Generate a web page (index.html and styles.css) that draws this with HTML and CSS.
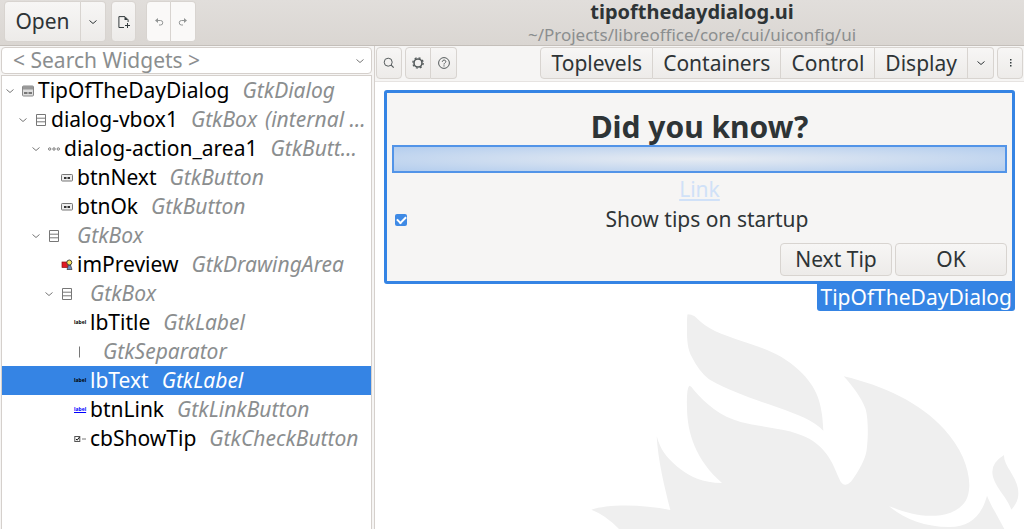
FILE: index.html
```
<!DOCTYPE html>
<html lang="en">
<head>
    <meta charset="UTF-8">
    <meta name="viewport" content="width=device-width, initial-scale=1.0">
    <title>tipofthedaydialog.ui</title>
    <link rel="stylesheet" href="styles.css">
</head>
<body>
    <!-- Shared icons -->
    <svg class="sprite" aria-hidden="true">
        <symbol id="chevron" viewBox="0 0 12 12"><path d="M2.500 4.500 6 7.500 9.500 4.500" fill="none" stroke="currentColor"/></symbol>
        <symbol id="box" viewBox="0 0 12 12"><path d="M1.500 .5h9v11h-9zM1.500 4.200h9M1.500 7.800h9" fill="none" stroke="#777"/></symbol>
        <symbol id="button" viewBox="0 0 12 12"><rect x=".5" y="2.500" width="11" height="6.500" rx=".8" fill="#eee" stroke="#777"/><path d="M3 5h2v2H3zM5.500 5h1v2h-1zM7 5h2v2H7z" fill="#333"/></symbol>
    </svg>

    <header class="headerbar">
        <div class="header-actions">
            <div class="btn-group">
                <button class="btn open-btn">Open</button>
                <button class="btn arrow-btn" aria-label="Recent files"><svg class="icon"><use href="#chevron"/></svg></button>
            </div>
            <button class="btn new-btn" aria-label="New project">
                <svg class="icon" viewBox="0 0 12 12"><path d="M6 11.500H.9V.6h6l3.200 3.200V6" fill="none" stroke="#333b3d"/><path d="M6.500.5V4H10z" fill="#333b3d"/><path d="M9.500 7v5M7 9.500h5" stroke="#333b3d"/></svg>
            </button>
            <div class="btn-group undo-group">
                <button class="btn" disabled aria-label="Undo"><svg class="icon" viewBox="0 0 12 12"><path d="M3 4.500h4.500a2.200 2.200 0 0 1 0 4.500H6" fill="none" stroke="#929595"/><path d="M5 2v5L2 4.500z" fill="#929595"/></svg></button>
                <button class="btn" disabled aria-label="Redo"><svg class="icon" viewBox="0 0 12 12"><path d="M9 4.500H4.500a2.200 2.200 0 0 0 0 4.500H6" fill="none" stroke="#929595"/><path d="M7 2v5l3-2.500z" fill="#929595"/></svg></button>
            </div>
        </div>
        <div class="header-title">
            <h1>tipofthedaydialog.ui</h1>
            <p>~/Projects/libreoffice/core/cui/uiconfig/ui</p>
        </div>
    </header>

    <main class="workspace">
        <aside class="inspector">
            <div class="search">
                <input type="text" placeholder="&lt; Search Widgets &gt;" aria-label="Search widgets">
                <svg class="icon"><use href="#chevron"/></svg>
            </div>
            <ul class="tree">
                <li class="row level-0">
                    <svg class="icon arrow"><use href="#chevron"/></svg>
                    <svg class="icon" viewBox="0 0 12 12"><rect x=".5" y="1" width="11" height="10" rx="1" fill="#ddd" stroke="#888"/><path d="M1 1h10v3.500H1z" fill="#999"/><path d="M2 7h3.500v2H2zM6.500 7H10v2H6.500z" fill="#777"/></svg>
                    <span class="name">TipOfTheDayDialog</span><em>GtkDialog</em>
                </li>
                <li class="row level-1">
                    <svg class="icon arrow"><use href="#chevron"/></svg>
                    <svg class="icon"><use href="#box"/></svg>
                    <span class="name">dialog-vbox1</span><em>GtkBox</em><em class="internal">(internal …</em>
                </li>
                <li class="row level-2">
                    <svg class="icon arrow"><use href="#chevron"/></svg>
                    <svg class="icon" viewBox="0 0 12 12"><g fill="none" stroke="#777"><circle cx="1.700" cy="6" r="1.200"/><circle cx="6" cy="6" r="1.200"/><circle cx="10.300" cy="6" r="1.200"/></g></svg>
                    <span class="name">dialog-action_area1</span><em>GtkButt…</em>
                </li>
                <li class="row leaf level-3">
                    <svg class="icon"><use href="#button"/></svg>
                    <span class="name">btnNext</span><em>GtkButton</em>
                </li>
                <li class="row leaf level-3">
                    <svg class="icon"><use href="#button"/></svg>
                    <span class="name">btnOk</span><em>GtkButton</em>
                </li>
                <li class="row level-2">
                    <svg class="icon arrow"><use href="#chevron"/></svg>
                    <svg class="icon"><use href="#box"/></svg>
                    <span class="name"></span><em>GtkBox</em>
                </li>
                <li class="row leaf level-3">
                    <svg class="icon" viewBox="0 0 12 12"><path d="M6 10.500 7.500 6h2l1.500 4.500z" fill="#6b8fc4" stroke="#333" stroke-width=".7"/><rect x="1" y="3" width="5.500" height="5.500" fill="#e01b24" stroke="#811" stroke-width=".7"/><circle cx="8.300" cy="3.500" r="2.500" fill="#f8e45c" stroke="#333" stroke-width=".9"/></svg>
                    <span class="name">imPreview</span><em>GtkDrawingArea</em>
                </li>
                <li class="row level-3">
                    <svg class="icon arrow"><use href="#chevron"/></svg>
                    <svg class="icon"><use href="#box"/></svg>
                    <span class="name"></span><em>GtkBox</em>
                </li>
                <li class="row leaf level-4">
                    <span class="icon label-icon">label</span>
                    <span class="name">lbTitle</span><em>GtkLabel</em>
                </li>
                <li class="row leaf level-4">
                    <svg class="icon" viewBox="0 0 12 12"><path d="M5.500 .5v11" stroke="#777"/></svg>
                    <span class="name"></span><em>GtkSeparator</em>
                </li>
                <li class="row leaf level-4 selected">
                    <span class="icon label-icon">label</span>
                    <span class="name">lbText</span><em>GtkLabel</em>
                </li>
                <li class="row leaf level-4">
                    <span class="icon label-icon link-icon">label</span>
                    <span class="name">btnLink</span><em>GtkLinkButton</em>
                </li>
                <li class="row leaf level-4">
                    <svg class="icon" viewBox="0 0 12 12"><rect x=".8" y="3.500" width="5" height="5" fill="#fff" stroke="#555"/><path d="m2 6 1.200 1.200L5.500 4" fill="none" stroke="#111"/><path d="M8 6h4" stroke="#777"/></svg>
                    <span class="name">cbShowTip</span><em>GtkCheckButton</em>
                </li>
            </ul>
        </aside>

        <section class="editor">
            <div class="toolbar">
                <button class="btn tool-btn" aria-label="Search"><svg class="icon" viewBox="0 0 12 12"><circle cx="5.200" cy="5.200" r="4" fill="none" stroke="#555b5c"/><path d="m8.200 8.200 2.500 2.500" stroke="#555b5c" stroke-width="1.200"/></svg></button>
                <div class="btn-group">
                    <button class="btn tool-btn" aria-label="Settings"><svg class="icon" viewBox="0 0 12 12"><circle cx="6" cy="6" r="4" fill="none" stroke="#555b5c" stroke-width="1.600"/><circle cx="6" cy="6" r="5.200" fill="none" stroke="#555b5c" stroke-width="1.300" stroke-dasharray="2 2.080"/></svg></button>
                    <button class="btn tool-btn" aria-label="Help"><svg class="icon" viewBox="0 0 12 12"><circle cx="6" cy="6" r="5.400" fill="none" stroke="#555b5c"/><path d="M4.300 4.800c0-2.300 3.500-2.200 3.500-.2 0 1.300-1.800 1.300-1.800 2.900M6 8.300v1.200" fill="none" stroke="#555b5c"/></svg></button>
                </div>
                <div class="btn-group palette">
                    <button class="btn">Toplevels</button>
                    <button class="btn">Containers</button>
                    <button class="btn">Control</button>
                    <button class="btn">Display</button>
                    <button class="btn tool-btn" aria-label="More widgets"><svg class="icon"><use href="#chevron"/></svg></button>
                </div>
                <button class="btn tool-btn" aria-label="Menu"><svg class="icon" viewBox="0 0 12 12"><path d="M6 2h1.500v1.500H6zM6 5h1.500v1.500H6zM6 8h1.500v1.500H6z" fill="#333b3d"/></svg></button>
            </div>

            <div class="canvas">
                <svg class="watermark" viewBox="0 0 1350 687" fill="#efefef" aria-hidden="true">
                    <path d="M341 43Q352 43 362 49C400 89 440 102 500 122C570 145 625 163 675 211C732 264 745 314 748 392C715 360 675 345 610 322C530 294 470 275 405 238Q376 216 354 172C337 143 339 105 339 70Q339 47 341 43Z"/>
                    <path d="M52 629C100 612 205 612 289 630C270 555 252 480 248 408C260 450 275 470 310 500C350 532 385 547 444 549C365 480 340 400 339 325Q337 265 346 257Q352 258 360 271C395 312 440 350 500 366C560 382 640 384 695 411C755 440 775 485 795 535Q802 554 813 554Q822 555 832 544C855 513 875 475 878 450C884 400 882 350 874 325C862 293 835 257 809 229C930 257 1040 310 1110 387C1160 443 1185 500 1186 555C1185 600 1170 620 1130 638C1065 660 1000 640 945 619C990 655 1050 681 1125 681C1185 682 1222 650 1239 587C1252 620 1275 655 1291 687H135Q95 645 52 629Z"/>
                    <path d="M1290 465C1288 500 1333 530 1333 580C1333 600 1325 615 1312 629C1300 590 1255 555 1255 515Q1255 487 1290 465Z"/>
                </svg>

                <div class="dialog">
                    <h2>Did you know?</h2>
                    <div class="text-slot"></div>
                    <a class="link" href="#">Link</a>
                    <div class="check-row">
                        <input type="checkbox" id="showTip" checked>
                        <label for="showTip">Show tips on startup</label>
                    </div>
                    <div class="dialog-actions">
                        <button class="btn">Next Tip</button>
                        <button class="btn">OK</button>
                    </div>
                    <span class="dialog-tag">TipOfTheDayDialog</span>
                </div>
            </div>
        </section>
    </main>
</body>
</html>
```
FILE: styles.css
```
* {
    box-sizing: border-box;
}
body {
    margin: 0;
    height: 100vh;
    display: flex;
    flex-direction: column;
    overflow: hidden;
    font-family: "Noto Sans", sans-serif;
    font-size: 21px;
    line-height: 29px;
    color: #2e3436;
    background-color: #f6f5f4;
}
h1, h2, p, ul {
    margin: 0;
    padding: 0;
}
.sprite {
    position: absolute;
    width: 0;
    height: 0;
}
.icon {
    display: block;
    width: 12px;
    height: 12px;
    flex: none;
    overflow: visible;
}

/* Buttons */
.btn {
    display: flex;
    align-items: center;
    justify-content: center;
    padding: 0 10px;
    border: 1px solid #d8d4d0;
    border-radius: 4px;
    background: linear-gradient(#f7f6f5, #edebe9);
    font: inherit;
    color: inherit;
    white-space: nowrap;
}
.btn:hover {
    background: #f9f9f8;
}
.btn:disabled {
    background: #faf9f8;
}
.btn-group {
    display: flex;
}
.btn-group .btn {
    border-radius: 0;
}
.btn-group .btn + .btn {
    border-left: 0;
}
.btn-group .btn:first-child {
    border-radius: 4px 0 0 4px;
}
.btn-group .btn:last-child {
    border-radius: 0 4px 4px 0;
}

/* Header bar */
.headerbar {
    display: grid;
    grid-template-columns: 360px 1fr;
    height: 46px;
    flex: none;
    background: linear-gradient(#e1dedb, #dad6d2);
    border-bottom: 1px solid #c4bfba;
}
.header-actions {
    display: flex;
    gap: 5px;
    padding: 1px 4px 4px;
}
.header-actions .btn {
    width: 25px;
    padding: 0;
}
.header-actions .open-btn {
    width: 77px;
}
.undo-group {
    margin-left: 5px;
}
.header-title {
    text-align: center;
}
.header-title h1 {
    font-size: 20px;
    line-height: 23px;
}
.header-title p {
    font-size: 17px;
    line-height: 23px;
    color: #8b8e8f;
}

/* Widget tree */
.workspace {
    display: flex;
    flex: 1;
    min-height: 0;
}
.inspector {
    width: 375px;
    flex: none;
    display: flex;
    flex-direction: column;
    padding: 1px 2px 0 1px;
    border-right: 1px solid #d5d0cc;
}
.search {
    display: flex;
    align-items: center;
    height: 27px;
    margin-bottom: 1px;
    padding: 0 5px 0 11px;
    border: 1px solid #d5d0cc;
    border-radius: 4px;
    background: #fff;
    color: #777;
}
.search input {
    flex: 1;
    min-width: 0;
    padding: 0;
    border: 0;
    outline: 0;
    background: none;
    font: inherit;
    line-height: 25px;
}
.search input::placeholder {
    color: #8b8e8f;
}
.tree {
    flex: 1;
    list-style: none;
    border: 1px solid #d5d0cc;
    border-bottom: 0;
    background: #fff;
    color: #000;
}
.row {
    display: flex;
    align-items: center;
    gap: 4px;
    height: 29px;
    white-space: nowrap;
}
.row .arrow {
    margin-right: 2px;
    color: #777;
}
.row em {
    margin-left: 9px;
    color: #8b8e8f;
}
.row .internal {
    margin-left: 4px;
}
.level-0 { padding-left: 2px; }
.level-1 { padding-left: 15px; }
.level-2 { padding-left: 28px; }
.level-3 { padding-left: 41px; }
.leaf.level-3 { padding-left: 59px; }
.leaf.level-4 { padding-left: 72px; }
.label-icon {
    font-size: 5px;
    font-weight: bold;
    line-height: 10px;
}
.link-icon {
    color: #00f;
    text-decoration: underline;
}
.row.selected {
    background: #3584e4;
}
.selected .name,
.selected em {
    color: #fff;
}

/* Editor */
.editor {
    flex: 1;
    min-width: 0;
    display: flex;
    flex-direction: column;
}
.toolbar {
    display: flex;
    gap: 3px;
    height: 36px;
    flex: none;
    padding: 1px 1px 2px;
    border-bottom: 1px solid #e6e3e1;
}
.toolbar .tool-btn {
    width: 26px;
    padding: 0;
}
.palette {
    margin-left: auto;
}
.canvas {
    position: relative;
    flex: 1;
    padding: 8px 9px;
    background: #fff;
}
.watermark {
    position: absolute;
    right: 0;
    bottom: 0;
    width: 450px;
}
.dialog {
    position: relative;
    display: flex;
    flex-direction: column;
    padding: 16px 5px 5px;
    border: 3px solid #3584e4;
    border-radius: 3px;
    background: #f6f5f4;
}
.dialog h2 {
    font-size: 30px;
    line-height: 36px;
    text-align: center;
}
.text-slot {
    height: 28px;
    border: 2px solid #5294e8;
    background: radial-gradient(ellipse at center, #e6ebf2, #b3cdee);
}
.link {
    align-self: center;
    line-height: 32px;
    color: #d0e1f8;
}
.check-row {
    display: flex;
    align-items: center;
    padding-left: 3px;
}
.check-row input {
    appearance: none;
    width: 12px;
    height: 12px;
    margin: 0;
    border-radius: 2px;
    background: #3f8ae5;
    display: grid;
    place-items: center;
}
.check-row input:checked::before {
    content: "";
    width: 7px;
    height: 4px;
    margin-bottom: 2px;
    border: solid #fff;
    border-width: 0 0 2px 2px;
    transform: rotate(-45deg);
}
.check-row label {
    flex: 1;
    text-align: center;
}
.dialog-actions {
    display: flex;
    justify-content: flex-end;
    gap: 3px;
    margin-top: 9px;
}
.dialog-actions .btn {
    width: 112px;
    height: 33px;
}
.dialog-tag {
    position: absolute;
    top: 100%;
    right: -3px;
    padding: 3px 3px 0;
    border-radius: 0 0 3px 3px;
    line-height: 27px;
    background: #3584e4;
    color: #fff;
}
```
